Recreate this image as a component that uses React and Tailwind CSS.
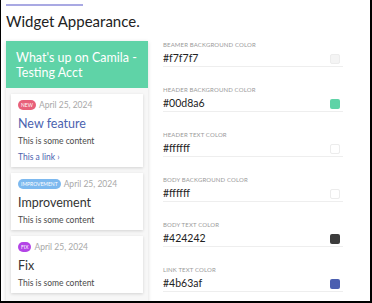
const settings = [
  { label: "Beamer background color", value: "#f7f7f7", swatch: "bg-[#f4f4f4] border border-[#ececec]" },
  { label: "Header background color", value: "#00d8a6", swatch: "bg-[#5fd3a7]" },
  { label: "Header text color", value: "#ffffff", swatch: "bg-white border border-[#ececec]" },
  { label: "Body background color", value: "#ffffff", swatch: "bg-white border border-[#ececec]" },
  { label: "Body text color", value: "#424242", swatch: "bg-[#3c3c3c]" },
  { label: "Link text color", value: "#4b63af", swatch: "bg-[#4b5fb0]" },
];

const posts = [
  {
    badge: "New",
    badgeClass: "bg-[#e8607a] px-[3px]",
    title: "New feature",
    titleClass: "text-[#4b63af]",
    link: true,
  },
  {
    badge: "Improvement",
    badgeClass: "bg-[#7db9ef] px-[3px]",
    title: "Improvement",
    titleClass: "text-[#333]",
  },
  {
    badge: "Fix",
    badgeClass: "bg-[#b344e6] px-[3px]",
    title: "Fix",
    titleClass: "text-[#333]",
  },
];

const PostCard = ({ post }) => (
  <div className="bg-white shadow-[0_1px_3px_rgba(0,0,0,0.15)] px-[7px] pt-[6px] pb-[4px]">
    <div className="flex items-center gap-[3px] h-[10px]">
      <span
        className={`${post.badgeClass} h-[10px] rounded-full text-white text-[5px] leading-[10px] uppercase`}
      >
        {post.badge}
      </span>
      <span className="text-[8.5px] text-[#a8a8a8]">April 25, 2024</span>
    </div>
    <p className={`${post.titleClass} mt-[6px] text-[12.5px] leading-[16px]`}>
      {post.title}
    </p>
    <p className="mt-[3px] text-[8.5px] leading-[12px] text-[#4a4a4a]">
      This is some content
    </p>
    {post.link && (
      <p className="mt-[4px] text-[8.5px] leading-[12px] text-[#4b63af]">
        This a link ›
      </p>
    )}
  </div>
);

export default function App() {
  return (
    <div className="w-[372px] h-[303px] bg-white border-l border-r-2 border-b-2 border-black overflow-hidden font-['Lato',sans-serif]">
      <div className="pl-[5px] pt-[4px]">
        <div className="w-[77px] h-[2px] bg-[#a9a9e3]" />
        <h1 className="mt-[6px] text-[15px] leading-[18px] text-[#222]">
          Widget Appearance.
        </h1>

        <div className="mt-[11px] flex gap-[15px]">
          <div className="w-[142px] h-[262px] bg-[#f7f7f7] shadow-[0_1px_4px_rgba(0,0,0,0.15)]">
            <div className="h-[47px] bg-[#5fd3a7] px-[10px] flex items-center">
              <p className="text-white text-[12.5px] leading-[15px]">
                What's up on Camila - Testing Acct
              </p>
            </div>
            <div className="flex flex-col gap-[6px] px-[5px] pt-[6px]">
              {posts.map((post, i) => (
                <PostCard key={i} post={post} />
              ))}
            </div>
          </div>

          <div className="w-[180px]">
            {settings.map((s, i) => (
              <div key={i} className="mb-[19px] pb-[1px] border-b border-[#eeeeee]">
                <p className="h-[8px] text-[6px] leading-[8px] tracking-[0.15px] uppercase text-[#9a9a9a] whitespace-nowrap">
                  {s.label}
                </p>
                <div className="mt-[3px] h-[13px] flex items-center justify-between pr-[3px]">
                  <span className="text-[10.5px] leading-[13px] text-[#222]">
                    {s.value}
                  </span>
                  <span className={`${s.swatch} w-[10px] h-[10px] rounded-[2px]`} />
                </div>
              </div>
            ))}
          </div>
        </div>
      </div>
    </div>
  );
}
